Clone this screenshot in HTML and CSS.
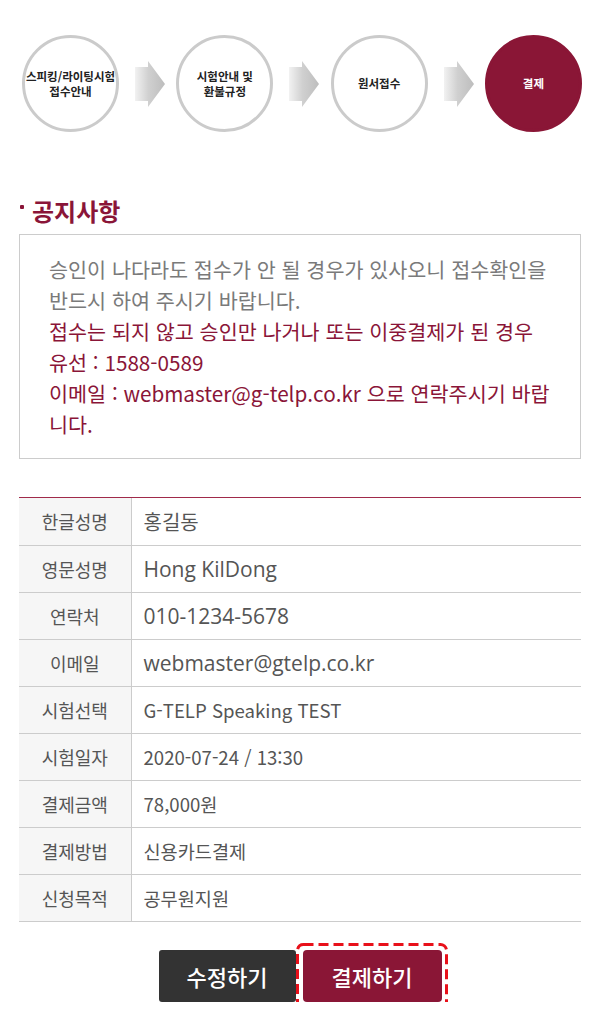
FILE: index.html
```html
<!DOCTYPE html>
<html lang="ko">
<head>
<meta charset="utf-8">
<title>결제</title>
<link rel="stylesheet" href="styles.css">
</head>
<body>
<div class="page">
  <div class="steps">
    <div class="step"><span>스피킹/라이팅시험<br>접수안내</span></div>
    <svg class="arrow" width="30" height="46" viewBox="0 0 30 46" aria-hidden="true">
      <defs>
        <linearGradient id="ag1" x1="0" y1="0" x2="1" y2="0">
          <stop offset="0" stop-color="#f2f2f2"/>
          <stop offset="0.45" stop-color="#d0d0d0"/>
          <stop offset="1" stop-color="#bdbdbd"/>
        </linearGradient>
      </defs>
      <polygon points="0,6 13,6 13,0 30,23 13,46 13,40 0,40" fill="url(#ag1)"/>
    </svg>
    <div class="step"><span>시험안내 및<br>환불규정</span></div>
    <svg class="arrow" width="30" height="46" viewBox="0 0 30 46" aria-hidden="true">
      <polygon points="0,6 13,6 13,0 30,23 13,46 13,40 0,40" fill="url(#ag1)"/>
    </svg>
    <div class="step"><span>원서접수</span></div>
    <svg class="arrow" width="30" height="46" viewBox="0 0 30 46" aria-hidden="true">
      <polygon points="0,6 13,6 13,0 30,23 13,46 13,40 0,40" fill="url(#ag1)"/>
    </svg>
    <div class="step step-active"><span>결제</span></div>
  </div>

  <h2 class="notice-title">공지사항</h2>
  <div class="notice-box">
    <p class="notice-gray">승인이 나다라도 접수가 안 될 경우가 있사오니 접수확인을<br>반드시 하여 주시기 바랍니다.</p>
    <p class="notice-red">접수는 되지 않고 승인만 나거나 또는 이중결제가 된 경우<br>유선 : 1588-0589<br>이메일 : webmaster@g-telp.co.kr 으로 연락주시기 바랍니다.</p>
  </div>

  <div class="info-wrap">
    <table class="info">
      <tbody>
        <tr><th>한글성명</th><td class="kr">홍길동</td></tr>
        <tr><th>영문성명</th><td class="alt">Hong KilDong</td></tr>
        <tr><th>연락처</th><td class="alt">010-1234-5678</td></tr>
        <tr><th>이메일</th><td class="alt">webmaster@gtelp.co.kr</td></tr>
        <tr><th>시험선택</th><td>G-TELP Speaking TEST</td></tr>
        <tr><th>시험일자</th><td>2020-07-24 / 13:30</td></tr>
        <tr><th>결제금액</th><td>78,000원</td></tr>
        <tr><th>결제방법</th><td>신용카드결제</td></tr>
        <tr><th>신청목적</th><td>공무원지원</td></tr>
      </tbody>
    </table>
  </div>

  <div class="buttons">
    <button class="btn btn-dark" type="button">수정하기</button>
    <span class="pay-wrap">
      <button class="btn btn-primary" type="button">결제하기</button>
      <svg class="focus-ring" width="152" height="66" viewBox="0 0 152 66" aria-hidden="true">
        <rect x="1.5" y="1.5" width="149" height="63" rx="6" ry="6" fill="none" stroke="#e8101a" stroke-width="3" stroke-dasharray="10 5"/>
      </svg>
    </span>
  </div>
</div>
</body>
</html>
```

FILE: styles.css
```css
* {
  box-sizing: border-box;
}

html, body {
  margin: 0;
  padding: 0;
  background: #ffffff;
}

body {
  font-family: "Noto Sans CJK KR", "Noto Sans", sans-serif;
  color: #555555;
}

.page {
  width: 600px;
  padding: 0 19px;
}

/* steps */
.steps {
  display: flex;
  align-items: center;
  justify-content: space-between;
  margin: 35px -1px 0 3px;
}

.step {
  width: 97px;
  height: 97px;
  flex: 0 0 97px;
  border-radius: 50%;
  border: 3px solid #cbcbcb;
  display: flex;
  align-items: center;
  justify-content: center;
  text-align: center;
  font-size: 11.5px;
  line-height: 15px;
  font-weight: 700;
  color: #222222;
  white-space: nowrap;
}

.step-active {
  background: #8a1636;
  border-color: #8a1636;
  color: #ffffff;
}

.arrow {
  display: block;
  flex: 0 0 30px;
  margin-left: 5px;
}

/* notice */
.notice-title {
  margin: 65px 0 0;
  padding-left: 13px;
  position: relative;
  font-size: 24px;
  line-height: 28px;
  font-weight: 700;
  color: #8a1538;
}

.notice-title::before {
  content: "";
  position: absolute;
  left: 1px;
  top: 8px;
  width: 4px;
  height: 4px;
  border-radius: 1px;
  background: #8a1538;
}

.notice-box {
  margin-top: 9px;
  border: 1px solid #cccccc;
  padding: 19px 18px 18px 29px;
  font-size: 20.7px;
  line-height: 31px;
}

.notice-box p {
  margin: 0;
}

.notice-gray {
  color: #7a7a7a;
}

.notice-red {
  color: #8a1538;
}

/* info table */
.info-wrap {
  margin-top: 38px;
  border-top: 1px solid #a02a4a;
}

.info {
  width: 100%;
  border-collapse: collapse;
}

.info th,
.info td {
  height: 47px;
  padding: 0;
  border-bottom: 1px solid #cccccc;
  vertical-align: middle;
}

.info th {
  width: 112px;
  background: #f6f6f6;
  border-right: 1px solid #cccccc;
  font-size: 18px;
  font-weight: 400;
  color: #555555;
  text-align: center;
}

.info td {
  padding-left: 12px;
  font-size: 18.6px;
  color: #555555;
  text-align: left;
}

.info td.kr {
  font-size: 20px;
}

.info td.alt {
  font-family: "Open Sans", "Noto Sans CJK KR", sans-serif;
  font-size: 21px;
}

/* buttons */
.buttons {
  display: flex;
  justify-content: center;
  align-items: center;
  gap: 7px;
  margin-top: 28px;
}

.btn {
  height: 52px;
  border: none;
  border-radius: 3px;
  font-family: "Noto Sans CJK KR", "Noto Sans", sans-serif;
  font-size: 22px;
  font-weight: 500;
  color: #ffffff;
  padding: 0;
  cursor: pointer;
}

.btn-dark {
  width: 137px;
  background: #333333;
}

.pay-wrap {
  position: relative;
  display: flex;
}

.btn-primary {
  width: 139px;
  background: #8a1636;
  border-radius: 4px;
}

.focus-ring {
  position: absolute;
  left: -7px;
  top: -7px;
  pointer-events: none;
}
```
